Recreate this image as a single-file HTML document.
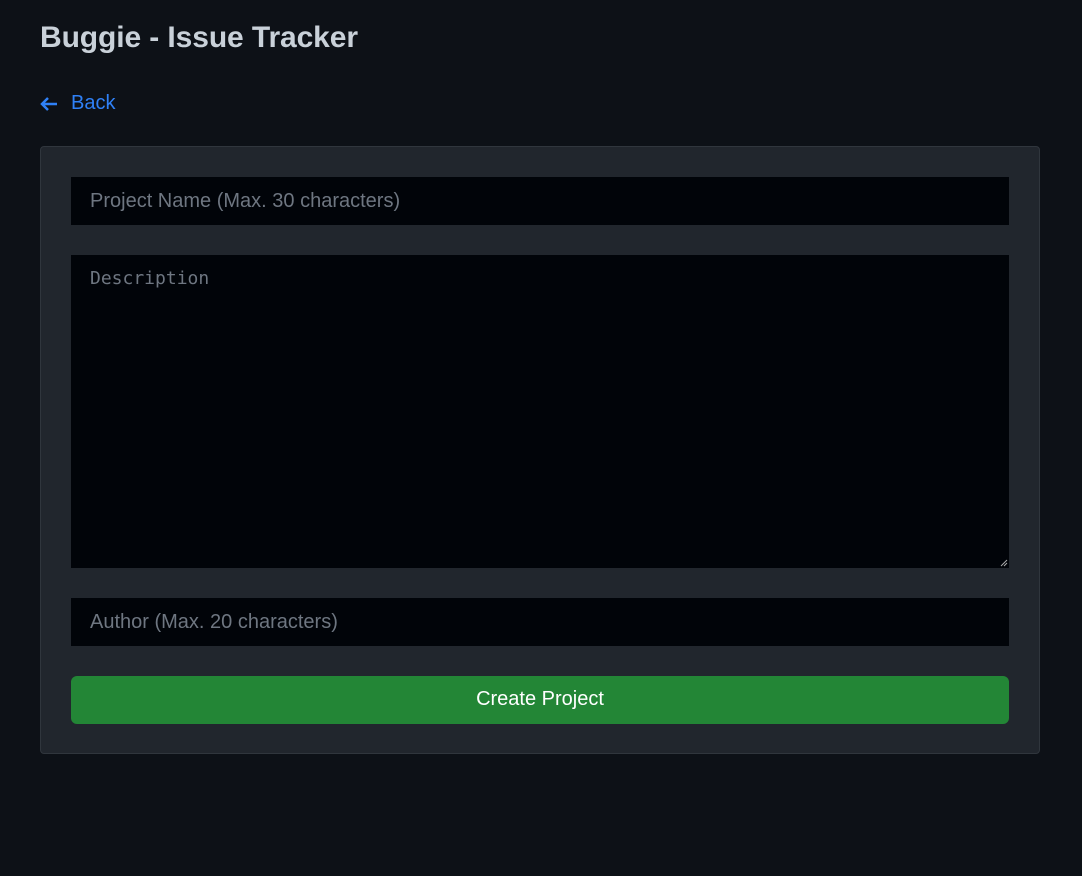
<!DOCTYPE html>
<html><head><style>
*{box-sizing:border-box;margin:0;padding:0}
body{width:1082px;height:876px;background:#0d1117;font-family:"Liberation Sans",sans-serif;position:relative;overflow:hidden}
h1{position:absolute;left:40px;top:21px;font-size:30px;font-weight:bold;color:#c9d1d9;letter-spacing:-0.1px}
.back{position:absolute;left:39px;top:92px;color:#2f81f7;font-size:20px;display:flex;align-items:center}
.back svg{margin-right:12px}
.card{position:absolute;left:40px;top:146px;width:1000px;height:608px;background:#21262d;border:1px solid #30363d;border-radius:4px}
.in{position:absolute;left:30px;width:938px;background:#010409;color:#6e7681;font-size:20px;padding-left:19px}
.btn{position:absolute;left:30px;top:529px;width:938px;height:48px;background:#238636;border-radius:6px;color:#fff;font-size:20px;text-align:center;line-height:46px}
</style></head><body>
<h1>Buggie - Issue Tracker</h1>
<div class="back"><svg width="20" height="20" viewBox="0 0 20 20"><path d="M18 10H3M9 4L3 10L9 16" stroke="#2f81f7" stroke-width="2.5" fill="none"/></svg>Back</div>
<div class="card">
<div class="in" style="top:30px;height:48px;line-height:48px">Project Name (Max. 30 characters)</div>
<div class="in" style="top:108px;height:313px;padding-top:13px;font-family:'DejaVu Sans Mono',monospace;font-size:18px">Description<svg style="position:absolute;right:1px;bottom:1px" width="9" height="9" viewBox="0 0 9 9"><path d="M8 2L2 8M8 5L5 8" stroke="#aaa" stroke-width="1"/></svg></div>
<div class="in" style="top:451px;height:48px;line-height:48px">Author (Max. 20 characters)</div>
<div class="btn">Create Project</div>
</div>
</body></html>
